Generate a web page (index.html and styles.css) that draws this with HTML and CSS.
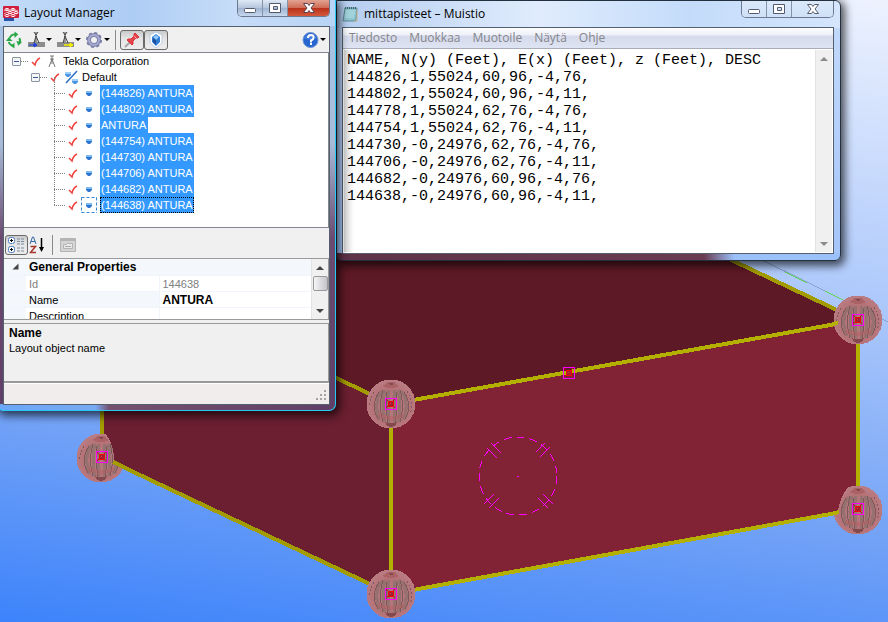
FILE: index.html
```
<!DOCTYPE html>
<html lang="fi">
<head>
<meta charset="UTF-8">
<title>Layout Manager</title>
<link rel="stylesheet" href="styles.css">
</head>
<body>

<div class="desktop">

<!-- 3D model view -->
<svg class="scene" width="888" height="622" viewBox="0 0 888 622" shape-rendering="crispEdges">
	<defs>
		<radialGradient id="ball" cx="50%" cy="55%" r="52%">
			<stop offset="0" stop-color="#b37a7d"/>
			<stop offset="0.7" stop-color="#b57277"/>
			<stop offset="1" stop-color="#b97c82"/>
		</radialGradient>
		<g id="target">
			<rect x="-6" y="-6" width="11" height="11" fill="none" stroke="#ff00ff"/>
			<path d="M-5 -5L4 4M4 -5L-5 4" stroke="#c40018"/>
			<rect x="-3" y="-3" width="5" height="5" fill="#a02034" stroke="#ff0000"/>
			<rect x="-1" y="-1" width="1" height="1" fill="#ff2a2a"/>
		</g>
		<g id="node">
			<circle r="24.5" fill="url(#ball)"/>
			<path d="M-8 -18Q0 -27 8 -18Q0 -14 -8 -18Z" fill="#ab6266"/>
			<path d="M-2 -21h4M-1 -20h3" stroke="#84494d"/>
			<g fill="none" stroke="#96716f" stroke-width="3">
				<path d="M-2 -14Q-4 2 -2 19M3 -14Q5 2 3 19M-6 -14Q-10 2 -6 18M7 -14Q11 2 7 18M-10 -13Q-18 2 -11 16M11 -13Q19 2 12 16"/>
			</g>
			<g fill="none" stroke="#7c5a5b">
				<path d="M-8 -14Q-13 2 -8 18M9 -14Q14 2 9 18M-12 -12Q-21 2 -13 15M13 -12Q22 2 14 15M-4 -12Q-6 2 -3 19M5 -12Q7 2 4 19"/>
				<path d="M-17 -12Q-22 -4 -21 2M16 -13Q23 0 19 10" stroke-dasharray="2 2"/>
			</g>
			<path d="M-6 18Q0 21 6 18Q4 23 0 23Q-4 23 -6 18Z" fill="#84494d"/>
			<path d="M-13 11Q0 17 13 11" fill="none" stroke="#b85c61" stroke-width="4" opacity="0.4"/>
		</g>
	</defs>

	<path d="M760 259L888 322" stroke="#8aa4cc"/>
	<path d="M785 272l22 11M825 291l20 10" stroke="#62d65a"/>

	<polygon points="391,404 102,267 569,183 858,320" fill="#5e1926"/>
	<polygon points="391,404 102,267 102,457 391,594" fill="#6b1f30"/>
	<polygon points="391,404 858,320 858,509 391,594" fill="#812335"/>

	<g fill="none" stroke="#b3b000" stroke-width="4">
		<path d="M391 404L858 320V509L391 594V404"/>
		<path d="M391 404L102 267V457L391 594M858 320L569 183" stroke="#a29c00"/>
	</g>

	<g fill="none" stroke="#ff00ff">
		<circle cx="518" cy="476" r="39" stroke-dasharray="8 5"/>
		<path d="M487 448l10 10M491 443l10 10M536 452l9 -9M540 457l10 -10M484 504l10 -10M489 508l10 -10M538 498l10 10M543 494l10 10"/>
		<path d="M517 476h2"/>
	</g>

	<use href="#node" x="391" y="404"/>
	<use href="#node" x="391" y="594"/>
	<use href="#node" x="858" y="320"/>
	<use href="#node" x="858" y="510"/>
	<use href="#node" x="101" y="458"/>

	<!-- faces that hide part of a node -->
	<path d="M104 432Q115 444 114 463L127 469V432Z" fill="#6b1f30"/>
	<path d="M113 462L128 469" stroke="#a29c00" stroke-width="4"/>
	<path d="M851 485Q841 492 838 511L832 512V485Z" fill="#812335"/>
	<path d="M831 514L839 512" stroke="#b3b000" stroke-width="4"/>
	<path d="M832 324L838 323" stroke="#b3b000" stroke-width="4"/>

	<use href="#target" x="391" y="404"/>
	<use href="#target" x="391" y="594"/>
	<use href="#target" x="858" y="320"/>
	<use href="#target" x="858" y="509"/>
	<use href="#target" x="102" y="457"/>
	<use href="#target" x="569" y="373"/>
</svg>

<!-- Notepad -->
<section class="window notepad">
	<header class="titlebar">
		<svg class="app-icon" width="16" height="16" viewBox="0 0 16 16">
			<path d="M3 2h12l-1 13H1z" fill="#8cc4cf" stroke="#5c8790"/>
			<path d="M4 5h9M4 7h9M3 9h9M3 11h9" stroke="#b8e0e6"/>
			<path d="M3 2h12" stroke="#41666e" stroke-width="2" stroke-dasharray="1 1"/>
			<path d="M15 4v11l-3 .5" fill="none" stroke="#c9b88c"/>
		</svg>
		<h1 class="title">mittapisteet – Muistio</h1>
		<div class="caption">
			<button class="cap" aria-label="Pienennä"><svg width="14" height="12"><rect x="1.500" y="6.500" width="11" height="4" rx="1" fill="#fff" stroke="#555b6e"/></svg></button>
			<button class="cap" aria-label="Suurenna"><svg width="14" height="12"><path d="M1.500 1.500h11v9h-11zM5.500 4.500v3h4v-3z" fill="#fff" fill-rule="evenodd" stroke="#555b6e"/></svg></button>
			<button class="cap cap-wide" aria-label="Sulje"><svg width="14" height="12"><path d="M1.500 1.500h4l1.500 2 1.500-2h4l-3.500 4.500 3.500 4.500h-4l-1.500-2-1.500 2h-4l3.500-4.500z" fill="#fff" stroke="#555b6e"/></svg></button>
		</div>
	</header>
	<div class="client">
		<nav class="menubar">
			<button>Tiedosto</button>
			<button>Muokkaa</button>
			<button>Muotoile</button>
			<button>Näytä</button>
			<button>Ohje</button>
		</nav>
		<div class="editor">
			<textarea class="text" aria-label="Teksti" spellcheck="false">NAME, N(y) (Feet), E(x) (Feet), z (Feet), DESC
144826,1,55024,60,96,-4,76,
144802,1,55024,60,96,-4,11,
144778,1,55024,62,76,-4,76,
144754,1,55024,62,76,-4,11,
144730,-0,24976,62,76,-4,76,
144706,-0,24976,62,76,-4,11,
144682,-0,24976,60,96,-4,76,
144638,-0,24976,60,96,-4,11,</textarea>
			<div class="scrollbar disabled">
				<button aria-label="Ylös"><svg width="8" height="4"><path d="M4 0l4 4H0z"/></svg></button>
				<button aria-label="Alas"><svg width="8" height="4"><path d="M4 4l4-4H0z"/></svg></button>
			</div>
		</div>
	</div>
</section>

<!-- Layout Manager -->
<section class="window manager">
	<header class="titlebar">
		<svg class="app-icon" width="17" height="16" viewBox="0 0 17 16">
			<rect x="1" y="9" width="10" height="7" fill="#2a52a8"/>
			<rect x="0" y="1" width="16" height="12" rx="1" fill="#d01f3c"/>
			<g fill="none" stroke="#fff">
				<path d="M1 6l3-2 3 2 3-2 3 2 2-1M1 9l3-2 3 2 3-2 3 2 2-1" stroke="#f0a8b4"/>
				<ellipse cx="4" cy="4.500" rx="2" ry="1"/><ellipse cx="10" cy="4.500" rx="2" ry="1"/>
				<ellipse cx="7" cy="7.500" rx="2" ry="1"/><ellipse cx="13" cy="7.500" rx="2" ry="1"/>
				<ellipse cx="10" cy="10.500" rx="2" ry="1"/><ellipse cx="4" cy="10.500" rx="2" ry="1"/>
			</g>
		</svg>
		<h1 class="title">Layout Manager</h1>
		<div class="caption">
			<button class="cap" aria-label="Minimize"><svg width="14" height="12"><rect x="1.500" y="6.500" width="11" height="4" rx="1" fill="#fff" stroke="#555b6e"/></svg></button>
			<button class="cap" aria-label="Maximize"><svg width="14" height="12"><path d="M1.500 1.500h11v9h-11zM5.500 4.500v3h4v-3z" fill="#fff" fill-rule="evenodd" stroke="#555b6e"/></svg></button>
			<button class="cap cap-wide cap-close" aria-label="Close"><svg width="14" height="12"><path d="M1.500 1.500h4l1.500 2 1.500-2h4l-3.500 4.500 3.500 4.500h-4l-1.500-2-1.500 2h-4l3.500-4.500z" fill="#fff" stroke="#5a4450"/></svg></button>
		</div>
	</header>

	<div class="client">
		<div class="toolbar">
			<button class="tool" aria-label="Refresh">
				<svg width="17" height="18" viewBox="0 0 18 18"><g fill="none" stroke="#26a745" stroke-width="2"><path d="M4 7q1 -4 6 -4M14 7q2 3 0 5M8 15q-4 0 -5 -4"/></g><path d="M9 0l4 3-4 4zM17 11l-4 4-2-5zM0 10l3-4 4 4zM9 12v6l-4-3z" fill="#26a745"/></svg>
			</button>
			<button class="tool drop" aria-label="Import">
				<svg width="17" height="18" viewBox="0 0 17 18"><rect y="11" width="17" height="5" fill="#8c8c8c"/><path d="M8 1v4M8 5l-2 7M8 5l3 7M8 5v6M6 1l2 3 2-3" fill="none" stroke="#444"/><path d="M1 14h5" stroke="#1d3fe0"/><path d="M6 12l3 2-3 2z" fill="#1d3fe0" stroke="#1d3fe0"/></svg>
			</button>
			<button class="tool drop" aria-label="Export">
				<svg width="17" height="18" viewBox="0 0 17 18"><rect y="11" width="17" height="5" fill="#8c8c8c"/><path d="M8 1v4M8 5l-2 7M8 5l3 7M8 5v6M6 1l2 3 2-3" fill="none" stroke="#444"/><path d="M7 14h6" stroke="#f5f000" stroke-width="1.500"/><path d="M13 12l3 2-3 2z" fill="#f5f000" stroke="#f5f000"/></svg>
			</button>
			<button class="tool drop" aria-label="Settings">
				<svg width="17" height="18" viewBox="0 0 17 18"><circle cx="8" cy="9" r="7" fill="none" stroke="#7478a0" stroke-width="2" stroke-dasharray="3 2.500"/><circle cx="8" cy="9" r="5" fill="none" stroke="#8084b0" stroke-width="4"/><circle cx="8" cy="9" r="5" fill="none" stroke="#a6aacd" stroke-width="2"/></svg>
			</button>
			<span class="sep"></span>
			<button class="tool pressed" aria-label="Pin">
				<svg width="18" height="18" viewBox="0 0 18 18"><path d="M2 16l5-5" stroke="#a7a7a7" stroke-width="2"/><path d="M12 2l4 4-1 1h-2l-3 3v3l-1 1-5-5 1-1h3l3-3V3z" fill="#e8444b" stroke="#d8353f"/><path d="M11 5l3 3" stroke="#ff9a9d"/></svg>
			</button>
			<button class="tool pressed" aria-label="Show points">
				<svg width="18" height="18" viewBox="0 0 18 18"><path d="M9 1l6 3v8l-6 5-6-5V4z" fill="#fff" stroke="#b8cde6"/><path d="M9 3l4 3v5l-4 4-4-4V6z" fill="#2e7bd6"/><path d="M9 4l3 2-3 3-3-3z" fill="#8dc8f8"/><path d="M9 9v5l-3-3V7z" fill="#1e4f9c"/></svg>
			</button>
			<button class="tool drop help" aria-label="Help">
				<svg width="17" height="18" viewBox="0 0 17 18"><circle cx="8.500" cy="9" r="7.500" fill="#2765cf" stroke="#6c93d4"/><path d="M2 7q6 -8 13 0q-7 3 -13 0z" fill="#5b93e8" opacity=".6"/><path d="M6 7q0-3 3-3t2.500 3q0 1.500-2.500 2.500v2M8 13h2" fill="none" stroke="#fff" stroke-width="2"/></svg>
			</button>
		</div>

		<ul class="tree" id="tree">
			<li class="row root"><button class="expander" aria-label="Collapse"></button><span class="dots"></span>
				<svg class="check" width="16" height="16"><path d="M4 9l3 3q1 -5 5 -7"/></svg>
				<svg class="icon" width="18" height="16"><path d="M8 3v3M8 6l-3 8M8 6l3 8M8 6v5M6 3h4M6 6h4" fill="none" stroke="#777"/></svg>
				<span class="label">Tekla Corporation</span></li>
			<li class="row group"><button class="expander" aria-label="Collapse"></button><span class="dots"></span>
				<svg class="check" width="16" height="16"><path d="M4 9l3 3q1 -5 5 -7"/></svg>
				<svg class="icon" width="18" height="16"><path d="M3 14L14 2" stroke="#2b6fc4" stroke-width="1.500"/><path d="M2 3h6v3l-2 2h-2l-2-2zM9 10h6v3l-2 2h-2l-2-2z" fill="#4a94e0"/><path d="M2 4h6M9 11h6" stroke="#9cd0f8" stroke-width="2"/></svg>
				<span class="label">Default</span></li>
		</ul>

		<div class="toolbar small">
			<button class="tool pressed" aria-label="Categorized">
				<svg width="17" height="16" viewBox="0 0 17 16"><g fill="#fff" stroke="#4b7fc0"><rect x=".500" y=".500" width="6" height="6" rx="2"/><rect x=".500" y="9.500" width="6" height="6" rx="2"/></g><path d="M2 3.500h3M3.500 2v3M2 12.500h3M3.500 11v3" stroke="#000"/><path d="M9 2h3M13 2h3M9 4.500h3M13 4.500h3M9 7h3M13 7h3M9 11h3M13 11h3M9 14h3M13 14h3" stroke="#7c8ca4"/></svg>
			</button>
			<button class="tool" aria-label="Alphabetical">
				<svg width="16" height="18" viewBox="0 0 16 18"><path d="M1 8l2.500-7h1L7 8M2 5.500h4" fill="none" stroke="#3465a4"/><path d="M1.500 10.500h5l-5 6h5.500" fill="none" stroke="#a8322e" stroke-width="1.500"/><path d="M12.500 2v12" stroke="#000" stroke-width="1.500"/><path d="M10 11h5l-2.500 5z"/></svg>
			</button>
			<span class="sep wide"></span>
			<button class="tool" disabled aria-label="Property pages">
				<svg width="16" height="16" viewBox="0 0 16 16"><path d="M.500 1.500h15v13H.500z" fill="#d5d5d5" stroke="#b4b4b4"/><path d="M1 3h14" stroke="#b4b4b4" stroke-width="2"/><path d="M3.500 7.500h3l1-1h5v5h-9z" fill="#e9e9e9" stroke="#b4b4b4"/><path d="M5 9.500h6" stroke="#aaa"/></svg>
			</button>
		</div>

		<div class="grid">
			<table class="props">
				<colgroup><col class="c-gutter"><col class="c-key"><col></colgroup>
				<tr class="category"><th class="gutter"><svg width="7" height="7"><path d="M6.500 .500v6h-6z" fill="#444"/></svg></th><th colspan="2">General Properties</th></tr>
				<tr class="readonly"><td class="gutter"></td><td class="key">Id</td><td>144638</td></tr>
				<tr class="current"><td class="gutter"></td><td class="key">Name</td><td class="value">ANTURA</td></tr>
				<tr><td class="gutter"></td><td class="key">Description</td><td></td></tr>
			</table>
			<div class="scrollbar">
				<button aria-label="Up"><svg width="8" height="4"><path d="M4 0l4 4H0z"/></svg></button>
				<span class="thumb"></span>
				<button aria-label="Down"><svg width="8" height="4"><path d="M4 4l4-4H0z"/></svg></button>
			</div>
		</div>

		<div class="hint">
			<h2>Name</h2>
			<p>Layout object name</p>
		</div>
		<footer class="status">
			<svg width="12" height="12"><path d="M9 1h2M5 5h2M9 5h2M1 9h2M5 9h2M9 9h2" stroke="#a5a2a2" stroke-width="2"/></svg>
		</footer>
	</div>
</section>

</div>

<script src="tree.js"></script>
</body>
</html>
```
FILE: styles.css
```
* {
	box-sizing: border-box;
}
body {
	margin: 0;
	font: 11px/16px "Liberation Sans", Arial, sans-serif;
	color: #000;
}
button {
	padding: 0;
	border: 0;
	background: none;
	font: inherit;
	color: inherit;
}
h1, h2, p, ul {
	margin: 0;
	padding: 0;
}
svg {
	display: block;
	flex: none;
}

.desktop {
	position: relative;
	min-height: 100vh;
	overflow: hidden;
	background: linear-gradient(188deg, #edf2fe 0%, #a9c6fb 43%, #77a5f6 70%, #3d83fb 100%);
}
.scene {
	position: absolute;
	left: 0;
	top: 0;
}

/* windows */
.window {
	position: absolute;
	top: 0;
	display: flex;
	flex-direction: column;
	box-shadow: 2px 3px 9px 2px rgba(0, 0, 0, 0.65);
}
.notepad {
	left: 336px;
	width: 505px;
	height: 261px;
	padding: 0 6px 6px 5px;
	border: 1px solid #23303f;
	border-radius: 0 6px 6px 6px;
	background:
		linear-gradient(90deg, #5e3247 0%, #6a3c52 73%, #9cc0fa 79%, #9cc0fa 100%) bottom / 100% 7px no-repeat,
		linear-gradient(90deg, #b4cdf0, #e0ecfd 40%, #c4dcfa 70%, #d4e5fc) top / 100% 27px no-repeat,
		linear-gradient(#c4dafa, #a4c5fa);
}
.manager {
	left: -3px;
	width: 339px;
	height: 411px;
	padding: 0 5px 5px 5px;
	border: 1px solid #26c8f4;
	border-top: 0;
	border-radius: 0 0 7px 7px;
	background:
		linear-gradient(90deg, #6ca6fa 0%, #79a9f0 29%, #76516f 33%, #5f3f66 100%) bottom / 100% 6px no-repeat,
		linear-gradient(90deg, #c3dbf8 0%, #aecdf4 40%, #c6dcf8 70%, #b8d4f4) top / 100% 26px no-repeat,
		linear-gradient(#a9c5e8 0%, #a8bcd8 35%, #6b4b70 58%, #5f3f66 100%);
}
.titlebar {
	display: flex;
	align-items: center;
	height: 26px;
	gap: 5px;
	flex: none;
}
.manager .titlebar {
	gap: 4px;
}
.title {
	font: 12px/18px "Open Sans", "Noto Sans", sans-serif;
}
.caption {
	display: flex;
	align-self: flex-start;
	margin-left: auto;
	border: 1px solid #6b7a90;
	border-top: 0;
	border-radius: 0 0 5px 5px;
	overflow: hidden;
}
.cap {
	display: flex;
	align-items: center;
	justify-content: center;
	width: 25px;
	height: 16px;
	border-right: 1px solid #8493aa;
	background: linear-gradient(#dfe9f6, #b4c5dc 50%, #9fb4d0 51%, #c6d8ee);
}
.notepad .cap {
	background: linear-gradient(#dbe8fa, #cfe0f7);
}
.cap-wide {
	width: 41px;
	border-right: 0;
}
.cap-close {
	background: linear-gradient(#e2a392, #cf6b55 50%, #b8311a 51%, #d4593c);
}
.client {
	flex: 1;
	display: flex;
	flex-direction: column;
	min-height: 0;
	border: 1px solid #55606f;
	background: #f0f0f0;
}

/* notepad */
.notepad .titlebar {
	gap: 6px;
}
.menubar {
	display: flex;
	gap: 12px;
	height: 21px;
	padding: 0 6px;
	border-bottom: 1px solid #a9adba;
	background: linear-gradient(#fdfdfe, #eef0f8 35%, #d5daec 40%, #dfe4f3);
	font: 12px/20px "Open Sans", "Noto Sans", sans-serif;
	color: #85858b;
}
.editor {
	flex: 1;
	display: flex;
	min-height: 0;
	padding: 1px;
	background: #fff;
}
.text {
	flex: 1;
	min-width: 0;
	padding: 2px 3px;
	border: 0;
	outline: 0;
	resize: none;
	overflow: hidden;
	background: linear-gradient(90deg, #d4d4d4, #fff 10px);
	font: 15px/17px "Courier New", "Liberation Mono", monospace;
	color: #000;
}
.scrollbar {
	display: flex;
	flex-direction: column;
	align-items: center;
	width: 17px;
	background: #f0f0f0;
	border-left: 1px solid #e3e3e3;
}
.scrollbar button {
	display: flex;
	align-items: center;
	justify-content: center;
	width: 100%;
	height: 17px;
	fill: #444;
}
.scrollbar button:last-child {
	margin-top: auto;
}
.disabled button {
	fill: #8a8a8a;
}
.thumb {
	width: 15px;
	height: 15px;
	border: 1px solid #999;
	border-radius: 2px;
	background: linear-gradient(90deg, #f6f6f6, #dcdce0 50%, #c4c4ca);
}

/* layout manager */
.toolbar {
	display: flex;
	align-items: center;
	height: 25px;
	padding: 0 2px 0 1px;
	flex: none;
	background: #f0f0f0;
}
.tool {
	display: flex;
	align-items: center;
	height: 20px;
	padding: 0 1px;
}
.drop {
	gap: 1px;
	margin-left: 3px;
}
.drop::after {
	content: "";
	border: 3px solid transparent;
	border-top-color: #000;
	border-bottom: 0;
}
.help {
	margin-left: auto;
}
.pressed {
	padding: 0 2px;
	border: 1px solid #6a6a6a;
	border-radius: 3px;
	background: linear-gradient(#c9c9c9, #e4e4e4 40%, #ededed);
}
.sep {
	width: 1px;
	height: 20px;
	margin: 0 4px;
	background: #8a8a8a;
}
.wide {
	margin: 0 6px;
}
.tree {
	height: 176px;
	list-style: none;
	border: 1px solid #828790;
	border-left: 0;
	background: #fff;
	flex: none;
}
.row {
	display: flex;
	align-items: center;
	height: 16px;
}
.root {
	padding-left: 8px;
}
.group {
	padding-left: 27px;
}
.point {
	position: relative;
	padding-left: 50px;
}
.point::before {
	content: "";
	position: absolute;
	left: 50px;
	top: -8px;
	height: 16px;
	border-left: 1px dotted #808080;
}
.expander {
	width: 9px;
	height: 9px;
	border: 1px solid #8a94a4;
	border-radius: 1px;
	background: linear-gradient(#3f5a9c, #3f5a9c) center / 5px 1px no-repeat, #f4f6f8;
}
.dots {
	width: 7px;
	border-top: 1px dotted #808080;
}
.point .dots {
	width: 11px;
}
.check {
	fill: none;
	stroke: #f0403c;
	stroke-width: 1.5px;
}
.label {
	padding: 0 1px;
	line-height: 16px;
}
.point .label {
	margin-left: 3px;
	background: #39f;
	color: #fff;
}
.point .label.short {
	padding-right: 2px;
}
.focus .label {
	outline: 1px dotted #000;
	outline-offset: -1px;
}
.focus .icon {
	background:
		linear-gradient(90deg, #3a86d0 60%, transparent 60%) top / 5px 1px repeat-x,
		linear-gradient(90deg, #3a86d0 60%, transparent 60%) bottom / 5px 1px repeat-x,
		linear-gradient(#3a86d0 60%, transparent 60%) left / 1px 5px repeat-y,
		linear-gradient(#3a86d0 60%, transparent 60%) right / 1px 5px repeat-y;
}
.small {
	height: 30px;
	padding-top: 3px;
}
.grid {
	display: flex;
	height: 62px;
	overflow: hidden;
	border: 1px solid #9a9a9a;
	border-left: 0;
	background: #fff;
	flex: none;
}
.props {
	flex: 1;
	align-self: flex-start;
	border-collapse: collapse;
	table-layout: fixed;
	width: 100%;
}
.c-gutter {
	width: 22px;
}
.c-key {
	width: 133px;
}
.props tr {
	height: 16px;
}
.props th, .props td {
	padding: 1px 3px 0;
	border-bottom: 1px solid #f0f4fb;
	line-height: 14px;
	text-align: left;
	white-space: nowrap;
}
.props th {
	font-size: 12px;
	background: #f4f7fc;
}
.props .gutter {
	padding: 0 0 0 8px;
	background: #f4f7fc;
}
.props .key {
	border-right: 1px solid #f0f4fb;
}
.current .key {
	background: #f4f7fc;
}
.props .value {
	font-size: 12px;
	font-weight: bold;
}
.readonly {
	color: #808080;
}
.hint {
	height: 60px;
	margin-top: 3px;
	padding: 1px 5px;
	border: 1px solid #9a9a9a;
	border-left: 0;
	border-bottom: 2px solid #9a9a9a;
	flex: none;
}
.hint h2 {
	font-size: 12px;
	line-height: 16px;
}
.hint p {
	line-height: 14px;
}
.status {
	flex: 1;
	display: flex;
	align-items: flex-end;
	justify-content: flex-end;
	padding: 2px;
	border-top: 1px solid #fff;
	background: #f0edec;
}
```
FILE: tree.js
```
var points = ["(144826) ANTURA", "(144802) ANTURA", "ANTURA", "(144754) ANTURA",
	"(144730) ANTURA", "(144706) ANTURA", "(144682) ANTURA", "(144638) ANTURA"];
var tree = document.getElementById("tree");

for (var i = 0; i < points.length; i++) {
	var row = document.createElement("li");
	row.className = i == points.length - 1 ? "row point focus" : "row point";
	row.innerHTML = '<span class="dots"></span>' +
		'<svg class="check" width="16" height="16"><path d="M4 9l3 3q1 -5 5 -7"/></svg>' +
		'<svg class="icon" width="16" height="16"><path d="M5 7h6v2l-2 2H7L5 9z" fill="#2f74d0"/><path d="M5 6h6v2H5z" fill="#7cbcf4"/></svg>' +
		'<span class="label' + (points[i] == "ANTURA" ? " short" : "") + '">' + points[i] + '</span>';
	tree.appendChild(row);
}
```
